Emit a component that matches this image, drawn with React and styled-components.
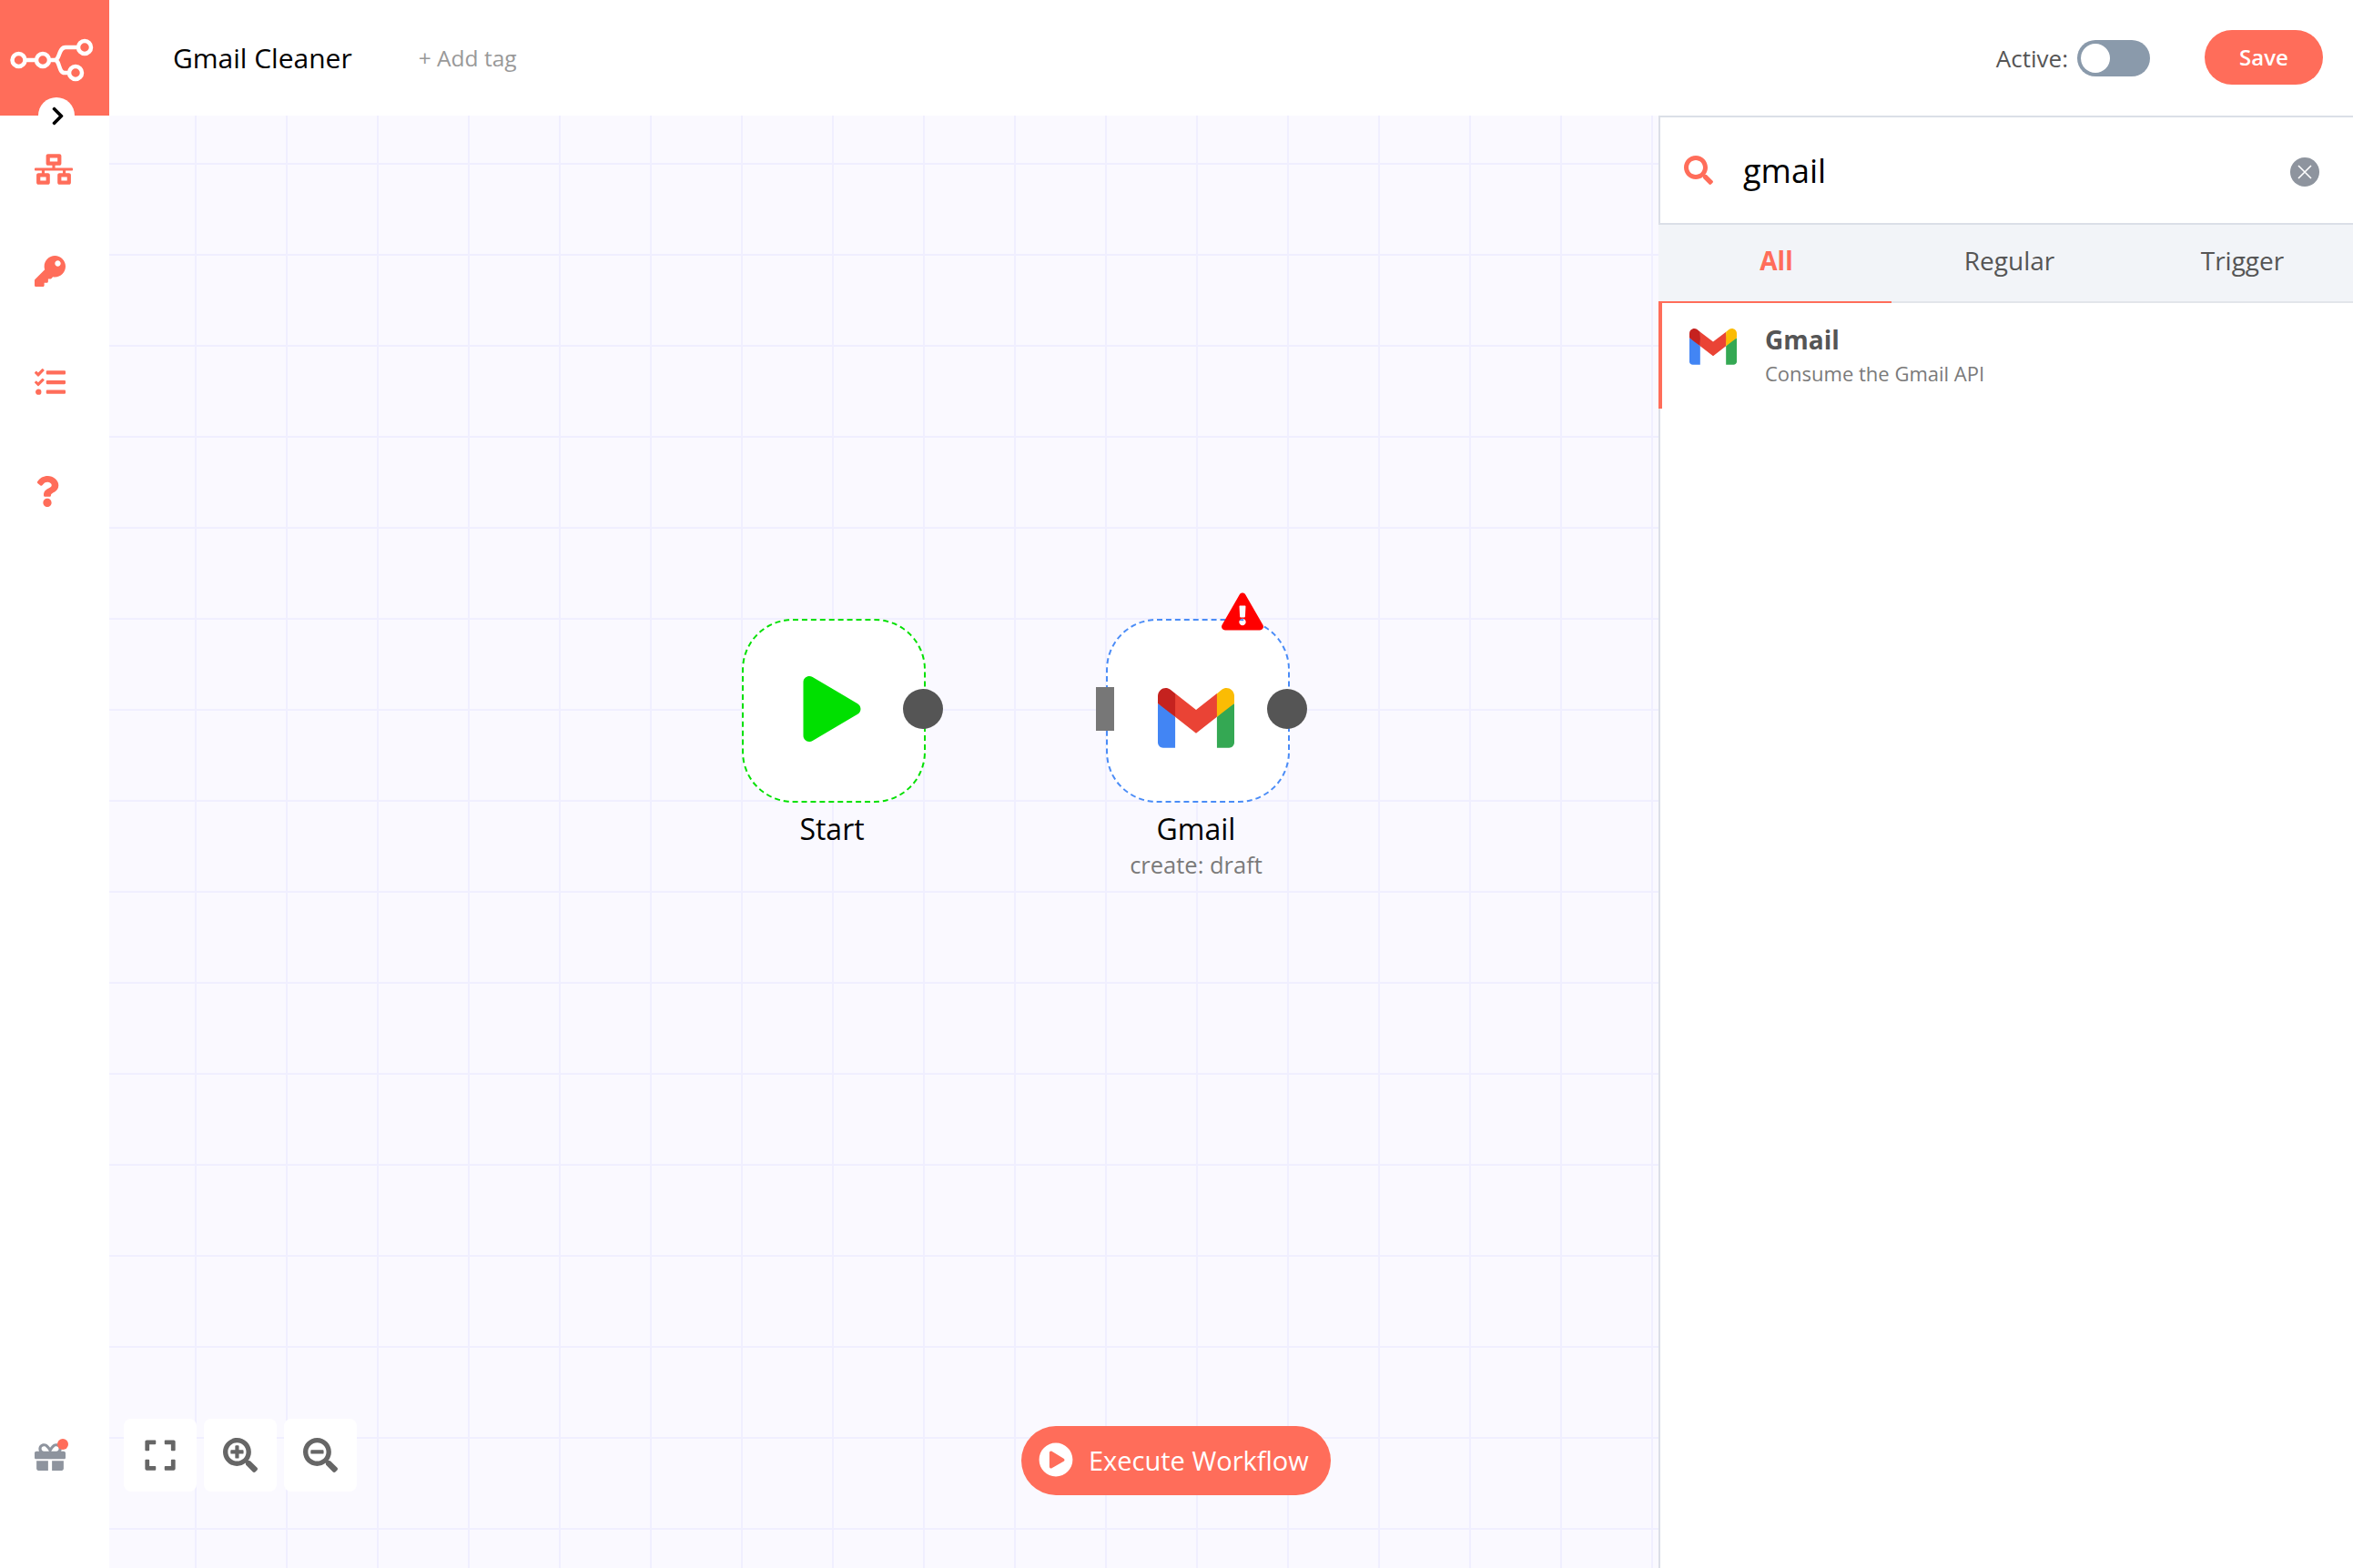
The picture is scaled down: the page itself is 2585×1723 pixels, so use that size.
import React from "react";
import styled, { createGlobalStyle } from "styled-components";
import {
  FaNetworkWired,
  FaKey,
  FaTasks,
  FaQuestion,
  FaGift,
  FaExpand,
  FaSearchPlus,
  FaSearchMinus,
  FaSearch,
  FaPlay,
  FaPlayCircle,
  FaChevronRight,
  FaExclamationTriangle,
} from "react-icons/fa";

const CORAL = "#ff6d5a";

const GlobalStyle = createGlobalStyle`
  html, body {
    margin: 0;
    padding: 0;
    background: #fff;
    font-family: "Open Sans", "Liberation Sans", sans-serif;
  }
`;

const Page = styled.div`
  width: 2585px;
  height: 1723px;
  overflow: hidden;
  display: grid;
  grid-template-columns: 120px 1fr;
  grid-template-rows: 127px 1fr;
`;

const Logo = styled.div`
  background: ${CORAL};
  position: relative;
`;

const CollapseButton = styled.div`
  position: absolute;
  left: 42px;
  top: 107px;
  width: 40px;
  height: 40px;
  border-radius: 50%;
  background: #fff;
  display: flex;
  align-items: center;
  justify-content: center;
  padding-left: 2px;
  box-sizing: border-box;
  font-size: 23px;
  color: #000;
  z-index: 2;
`;

const Header = styled.header`
  display: flex;
  align-items: center;
  padding-right: 33px;
  background: #fff;
`;

const Title = styled.div`
  margin-left: 70px;
  font-size: 30px;
  color: #000;
`;

const AddTag = styled.div`
  margin-left: 73px;
  font-size: 24.5px;
  color: #999;
`;

const ActiveLabel = styled.div`
  margin-left: auto;
  font-size: 26px;
  color: #555;
`;

const Toggle = styled.div`
  margin-left: 10px;
  width: 80px;
  height: 40px;
  border-radius: 20px;
  background: #8a9aab;
  padding: 4px;
  box-sizing: border-box;
`;

const Knob = styled.div`
  width: 32px;
  height: 32px;
  border-radius: 50%;
  background: #fff;
`;

const SaveButton = styled.button`
  margin-left: 60px;
  width: 130px;
  height: 60px;
  margin-top: -2px;
  border: none;
  border-radius: 30px;
  background: ${CORAL};
  color: #fff;
  font-family: inherit;
  font-size: 24px;
  font-weight: 600;
`;

const Sidebar = styled.nav`
  display: flex;
  flex-direction: column;
  align-items: flex-start;
  padding: 38px 0 105px 38px;
  background: #fff;
`;

const NavIcon = styled.div`
  display: flex;
  margin-top: ${(p) => p.$top || 0}px;
  margin-left: ${(p) => p.$left || 0}px;
  color: ${CORAL};
  font-size: ${(p) => p.$size}px;
  line-height: 0;
`;

const GiftSlot = styled.div`
  margin-top: auto;
  position: relative;
  color: #8e949e;
  font-size: 34px;
  line-height: 0;
`;

const GiftDot = styled.span`
  position: absolute;
  left: 25px;
  top: -3px;
  width: 12px;
  height: 12px;
  border-radius: 50%;
  background: ${CORAL};
`;

const Body = styled.div`
  display: flex;
  min-width: 0;
  min-height: 0;
`;

const Canvas = styled.main`
  flex: 1;
  position: relative;
  background-color: #faf9ff;
  background-image:
    linear-gradient(to right, #f0efff 2px, transparent 2px),
    linear-gradient(to bottom, #f0efff 2px, transparent 2px);
  background-size: 100px 100px;
  background-position: -6px 52px;
`;

const Node = styled.div`
  position: absolute;
  left: ${(p) => p.$left}px;
  top: 553px;
  width: 202px;
  display: flex;
  flex-direction: column;
  align-items: center;
`;

const NodeBox = styled.div`
  position: relative;
  width: 202px;
  height: 202px;
  box-sizing: border-box;
  border: 2px dashed ${(p) => p.$color};
  border-radius: 56px;
  background: #fff;
  display: flex;
  align-items: center;
  justify-content: center;
`;

const OutputDot = styled.span`
  position: absolute;
  left: 175px;
  top: 75px;
  width: 44px;
  height: 44px;
  border-radius: 50%;
  background: #555;
`;

const InputBar = styled.span`
  position: absolute;
  left: -13px;
  top: 73px;
  width: 20px;
  height: 48px;
  background: #777;
`;

const WarningBadge = styled.span`
  position: absolute;
  left: 125px;
  top: -33px;
  font-size: 46px;
  line-height: 0;
  color: #ff0000;
`;

const NodeName = styled.div`
  margin: 8px 4px 0 0;
  font-size: 32px;
  line-height: 42px;
  color: #000;
`;

const NodeSub = styled.div`
  margin-right: 4px;
  font-size: 25.5px;
  line-height: 36px;
  color: #7a7a7a;
  white-space: nowrap;
`;

const PlayIcon = styled(FaPlay)`
  color: #00e000;
  font-size: 72px;
  margin: -4px 0 0 -4px;
`;

const NodeGmail = styled.div`
  display: flex;
  margin: 16px 0 0 -5px;
`;

const ZoomControls = styled.div`
  position: absolute;
  left: 16px;
  top: 1432px;
  display: flex;
  gap: 8px;
`;

const ZoomButton = styled.button`
  width: 80px;
  height: 80px;
  border: none;
  border-radius: 8px;
  background: #fff;
  color: #666;
  font-size: 38px;
  display: flex;
  align-items: center;
  justify-content: center;
  padding: 0;
`;

const ExecuteButton = styled.button`
  position: absolute;
  left: 1002px;
  top: 1440px;
  width: 340px;
  height: 76px;
  border: none;
  border-radius: 38px;
  background: ${CORAL};
  color: #fff;
  display: flex;
  align-items: center;
  gap: 17px;
  padding: 0 0 2px 19px;
  font-family: inherit;
  font-size: 29px;
  font-weight: 500;
  white-space: nowrap;
`;

const ExecuteIcon = styled(FaPlayCircle)`
  font-size: 38px;
  flex: none;
`;

const Panel = styled.aside`
  width: 763px;
  flex: none;
  box-sizing: border-box;
  border-left: 2px solid #dbdfe7;
  border-top: 2px solid #dbdfe7;
  background: #fff;
  display: flex;
  flex-direction: column;
`;

const SearchRow = styled.div`
  height: 118px;
  box-sizing: border-box;
  border-bottom: 2px solid #dbdfe7;
  display: flex;
  align-items: center;
  padding: 0 37px 0 26px;
`;

const SearchIcon = styled(FaSearch)`
  color: ${CORAL};
  font-size: 32px;
  flex: none;
`;

const SearchText = styled.div`
  margin-left: 33px;
  font-size: 36px;
  color: #000;
  flex: 1;
`;

const ClearButton = styled.svg`
  width: 32px;
  height: 32px;
  flex: none;
  margin-top: 4px;
`;

const Tabs = styled.div`
  height: 86px;
  box-sizing: border-box;
  margin-left: -2px;
  background: #f2f4f8;
  border-bottom: 2px solid #e2e5ea;
  display: grid;
  grid-template-columns: repeat(3, 256px);
`;

const Tab = styled.div`
  display: flex;
  align-items: center;
  justify-content: center;
  box-sizing: border-box;
  height: 86px;
  padding: 0 0 6px 3px;
  font-size: 28px;
  font-weight: ${(p) => (p.$active ? 700 : 400)};
  color: ${(p) => (p.$active ? CORAL : "#555")};
  border-bottom: 2px solid ${(p) => (p.$active ? CORAL : "transparent")};
`;

const ResultItem = styled.div`
  height: 116px;
  box-sizing: border-box;
  margin-left: -2px;
  border-left: 4px solid ${CORAL};
  display: flex;
  align-items: flex-start;
  padding: 28px 0 0 30px;
`;

const ResultInfo = styled.div`
  margin-left: 31px;
  margin-top: -6px;
`;

const ResultName = styled.div`
  font-size: 28px;
  line-height: 36px;
  font-weight: 700;
  color: #555;
`;

const ResultDesc = styled.div`
  margin-top: 1px;
  font-size: 22px;
  line-height: 36px;
  color: #7a7a7a;
`;

function GmailIcon({ width, height }) {
  return (
    <svg width={width} height={height} viewBox="0 0 256 193" preserveAspectRatio="none">
      <path fill="#4285F4" d="M58.182 192.05V93.14L27.507 65.077 0 49.504v125.091c0 9.658 7.825 17.455 17.455 17.455h40.727Z" />
      <path fill="#34A853" d="M197.818 192.05h40.727c9.659 0 17.455-7.826 17.455-17.455V49.505l-31.156 17.837-27.026 25.798v98.91Z" />
      <path fill="#EA4335" d="m58.182 93.14-4.174-38.647 4.174-36.989L128 69.868l69.818-52.364 4.669 34.992-4.669 40.644L128 145.504z" />
      <path fill="#FBBC04" d="M197.818 17.504V93.14L256 49.504V26.231c0-21.585-24.64-33.89-41.89-20.945l-16.292 13.218Z" />
      <path fill="#C5221F" d="m0 49.504 26.759 20.07L58.182 93.14V17.504L41.89 5.286C24.61-7.66 0 4.646 0 26.23v23.273Z" />
    </svg>
  );
}

function N8nLogo() {
  return (
    <svg width="120" height="127" viewBox="0 0 120 127" fill="none" stroke="#fff" strokeWidth="4.5">
      <circle cx="20.5" cy="66" r="7" />
      <circle cx="47" cy="66" r="7" />
      <circle cx="93" cy="52" r="7" />
      <circle cx="83" cy="80" r="7" />
      <path d="M27.5 66H40M54 66H60C66 66 64 52 72 52H86M60 66C66 66 64 80 71 80H76" />
    </svg>
  );
}

export default function App() {
  return (
    <Page>
      <GlobalStyle />
      <Logo>
        <N8nLogo />
        <CollapseButton>
          <FaChevronRight />
        </CollapseButton>
      </Logo>
      <Header>
        <Title>Gmail Cleaner</Title>
        <AddTag>+ Add tag</AddTag>
        <ActiveLabel>Active:</ActiveLabel>
        <Toggle>
          <Knob />
        </Toggle>
        <SaveButton>Save</SaveButton>
      </Header>
      <Sidebar>
        <NavIcon $size={42}><FaNetworkWired /></NavIcon>
        <NavIcon $size={34} $top={74}><FaKey /></NavIcon>
        <NavIcon $size={34} $top={88}><FaTasks /></NavIcon>
        <NavIcon $size={34} $top={86} $left={-3}><FaQuestion /></NavIcon>
        <GiftSlot>
          <FaGift />
          <GiftDot />
        </GiftSlot>
      </Sidebar>
      <Body>
        <Canvas>
          <Node $left={695}>
            <NodeBox $color="#00e000">
              <PlayIcon />
              <OutputDot />
            </NodeBox>
            <NodeName>Start</NodeName>
          </Node>
          <Node $left={1095}>
            <NodeBox $color="#4a8cf7">
              <NodeGmail>
                <GmailIcon width={84} height={66} />
              </NodeGmail>
              <InputBar />
              <OutputDot />
              <WarningBadge>
                <FaExclamationTriangle />
              </WarningBadge>
            </NodeBox>
            <NodeName>Gmail</NodeName>
            <NodeSub>create: draft</NodeSub>
          </Node>
          <ZoomControls>
            <ZoomButton><FaExpand /></ZoomButton>
            <ZoomButton><FaSearchPlus /></ZoomButton>
            <ZoomButton><FaSearchMinus /></ZoomButton>
          </ZoomControls>
          <ExecuteButton>
            <ExecuteIcon />
            Execute Workflow
          </ExecuteButton>
        </Canvas>
        <Panel>
          <SearchRow>
            <SearchIcon />
            <SearchText>gmail</SearchText>
            <ClearButton viewBox="0 0 32 32">
              <circle cx="16" cy="16" r="16" fill="#8e949e" />
              <path d="M9 9L23 23M23 9L9 23" stroke="#fff" strokeWidth="1.6" />
            </ClearButton>
          </SearchRow>
          <Tabs>
            <Tab $active>All</Tab>
            <Tab>Regular</Tab>
            <Tab>Trigger</Tab>
          </Tabs>
          <ResultItem>
            <GmailIcon width={52} height={40} />
            <ResultInfo>
              <ResultName>Gmail</ResultName>
              <ResultDesc>Consume the Gmail API</ResultDesc>
            </ResultInfo>
          </ResultItem>
        </Panel>
      </Body>
    </Page>
  );
}
